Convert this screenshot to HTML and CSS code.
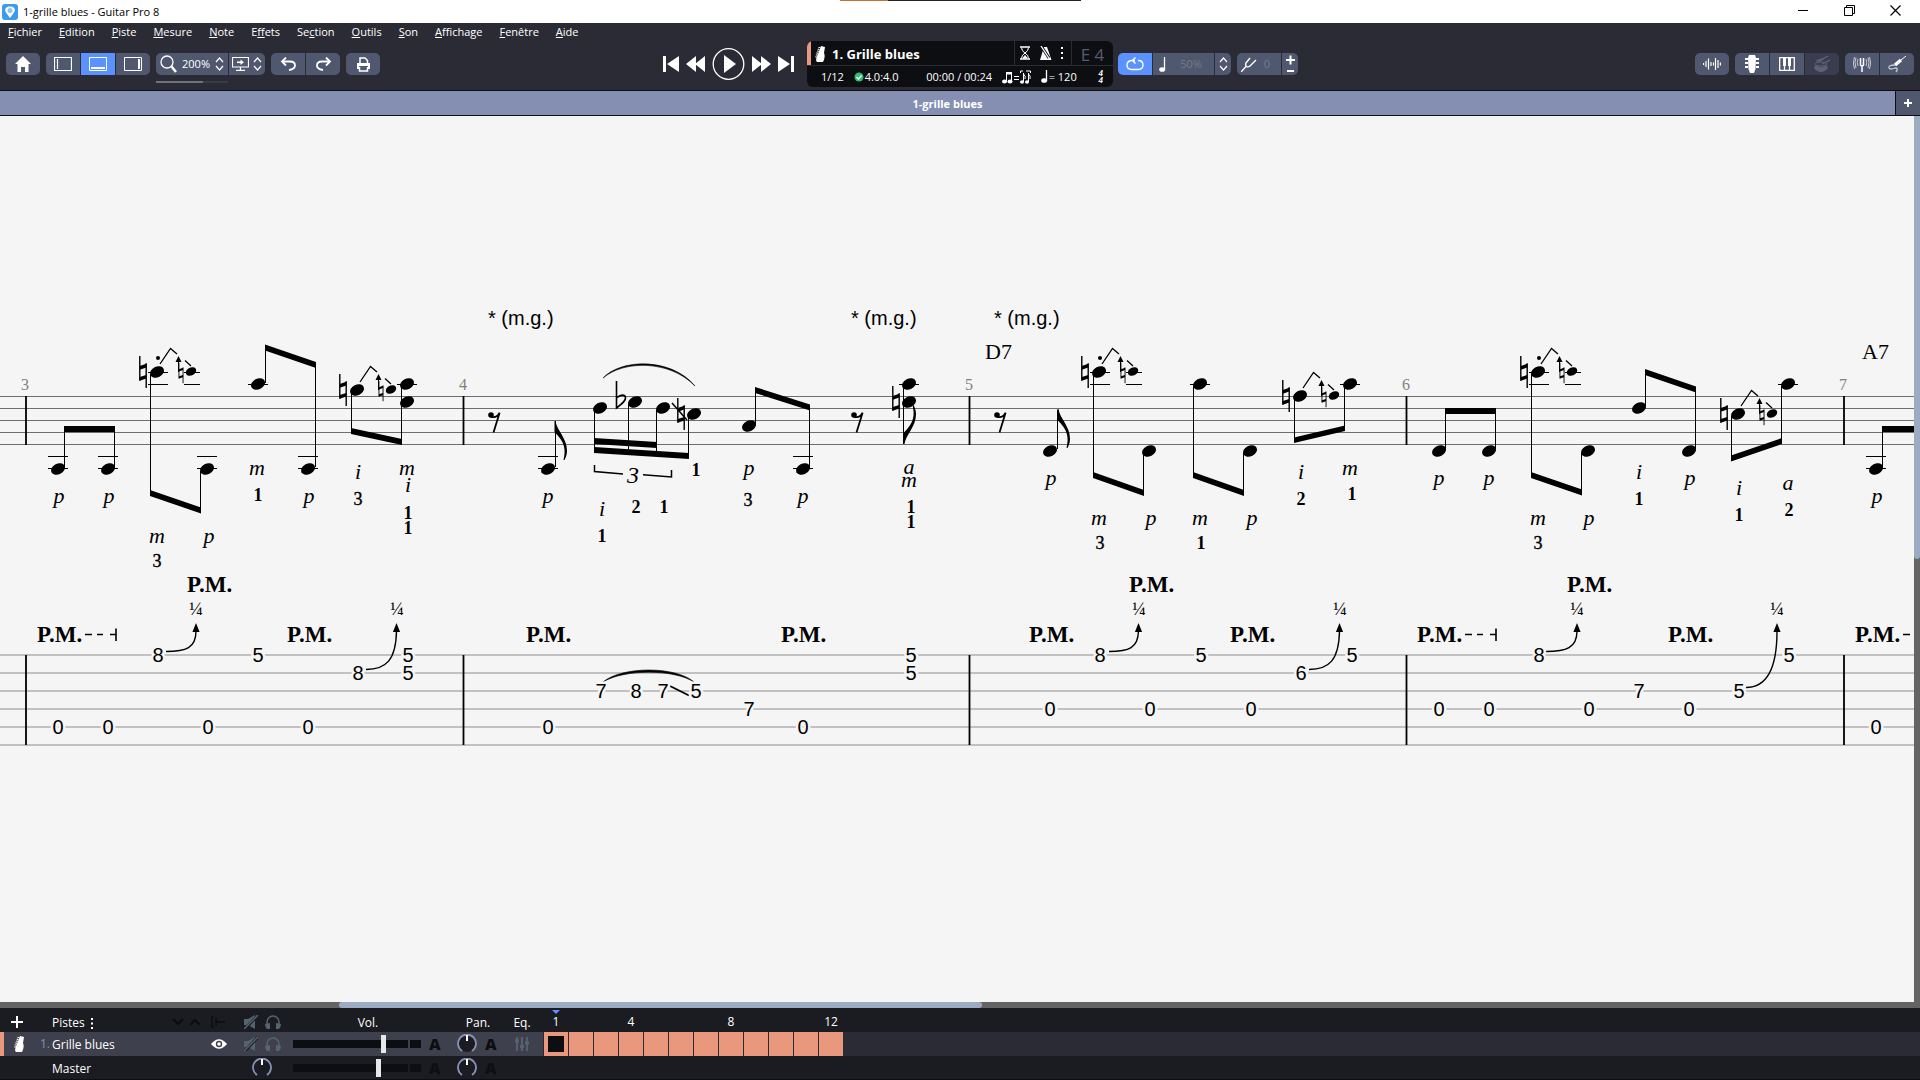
FILE: index.html
```html
<!DOCTYPE html>
<html lang="fr">
<head>
    <meta charset="UTF-8">
    <title>1-grille blues - Guitar Pro 8</title>
    <link rel="stylesheet" href="styles.css">
</head>
<body>
    <!-- shared shapes -->
    <svg class="defs" width="0" height="0">
        <defs>
            <g id="head"><ellipse rx="7.4" ry="5.3" transform="rotate(-27)"/></g>
            <g id="nat">
                <path d="M-3.2-16V8.7M3.2-8.7V16" fill="none" stroke="#000" stroke-width="1.4"/>
                <path d="M-3.2-6L3.2-8.3V-4.5L-3.2-2.3zM-3.2 5L3.2 3V6.6L-3.2 8.7z"/>
            </g>
            <!-- natural note + quarter bend to a small natural note -->
            <g id="bend">
                <use href="#nat" x="-14"/>
                <use href="#head"/>
                <path d="M3-8L13.5-23.5L20-18M28-11.5L34-6" fill="none" stroke="#000" stroke-width="1.3"/>
                <path d="M21.5-10V0" stroke="#000"/>
                <path d="M21.5-16L24.5-10H18.5z"/>
                <use href="#nat" transform="translate(24 1) scale(.64)"/>
                <ellipse cx="34" cy="-.5" rx="5.5" ry="4" transform="rotate(-27 34 -.5)"/>
            </g>
            <g id="bendHigh">
                <use href="#bend"/>
                <circle cx="1" cy="-14" r="2"/>
                <path d="M-9 .5H11M-9 12.5H11M27 .5H43M27 12.5H43" stroke="#000"/>
            </g>
            <g id="low">
                <use href="#head"/>
                <path d="M-10-12.5H10M-10-.5H10" stroke="#000"/>
            </g>
            <g id="high">
                <use href="#head"/>
                <path d="M-10 .5H10" stroke="#000"/>
            </g>
            <g id="rest">
                <circle r="2.8"/>
                <path d="M0 1.8C4 3 7 1 8.6-2.3L2.5 17.6" fill="none" stroke="#000" stroke-width="1.8"/>
            </g>
            <path id="flag" d="M-.5 0H.5C1.5 9 12 17 12 30C12 34 10.5 37 9.5 39H8.5C11 29 10 21-.5 11z"/>
            <g id="pmDash" stroke="#000" stroke-width="1.6">
                <path d="M0 634.5H7M12 634.5H18M25 634.5H31M31 628.5V641"/>
            </g>
            <path id="tip" d="M0 0L3.6 9H-3.6z"/>
            <g id="guitar">
                <path d="M6 0L10 1 9 7C10 9 10 12 8 16L2 16C0 14 2 11 3 8z" fill="#fff"/>
                <path d="M4.5 1L2 8L1 12" fill="none" stroke="#fff" stroke-dasharray="1 1" stroke-width="2"/>
            </g>
            <g id="mute" fill="#566472">
                <path d="M0 4H4L11 0V14L4 10H0z"/>
                <path d="M1 14L14 0" stroke="#1b1c21" stroke-width="3"/>
                <path d="M0 14L14 0" stroke="#566472" stroke-width="1.5"/>
            </g>
            <g id="phones">
                <path d="M2 10V7A6 6 0 0 1 14 7V10" fill="none" stroke="#566472" stroke-width="1.5"/>
                <path d="M0 9L5 8V14H2Q0 12 0 9zM16 9L11 8V14H14Q16 12 16 9z" fill="#566472"/>
            </g>
            <g id="knob">
                <path d="M5 17A9 9 0 1 1 15 17" fill="none" stroke="#8592b4" stroke-width="1.8"/>
                <path d="M10 1V7" stroke="#fff" stroke-width="2"/>
            </g>
            <path id="updown" d="M1 5L4.5 1L8 5M1 9L4.5 13L8 9" fill="none" stroke="#fff" stroke-width="1.2"/>
        </defs>
    </svg>

    <header class="titlebar">
        <svg class="logo" width="16" height="16">
            <rect width="16" height="16" rx="3" fill="#3c9bef"/>
            <path d="M8 14L4 8.5C2 5 4 2.5 8 2.5S14 5 12 8.5z" fill="#fff"/>
            <circle cx="8" cy="6.5" r="2.5" fill="#8cc6f7"/>
        </svg>
        <span>1-grille blues - Guitar Pro 8</span>
        <i class="notch"></i>
        <div class="winbtns">
            <button aria-label="Réduire"><svg width="11" height="11"><path d="M0 5.5H10" stroke="#000"/></svg></button>
            <button aria-label="Restaurer"><svg width="11" height="11"><path d="M.5 2.5H8.5V10.5H.5zM2.5 2.5V.5H10.5V8.5H8.5" fill="none" stroke="#000"/></svg></button>
            <button aria-label="Fermer"><svg width="11" height="11"><path d="M.5.5L10.5 10.5M10.5.5L.5 10.5" stroke="#000" stroke-width="1.2"/></svg></button>
        </div>
    </header>

    <nav class="menu">
        <a href="#"><u>F</u>ichier</a>
        <a href="#"><u>E</u>dition</a>
        <a href="#"><u>P</u>iste</a>
        <a href="#"><u>M</u>esure</a>
        <a href="#"><u>N</u>ote</a>
        <a href="#">E<u>f</u>fets</a>
        <a href="#">Se<u>c</u>tion</a>
        <a href="#"><u>O</u>utils</a>
        <a href="#"><u>S</u>on</a>
        <a href="#"><u>A</u>ffichage</a>
        <a href="#"><u>F</u>enêtre</a>
        <a href="#"><u>A</u>ide</a>
    </nav>

    <div class="toolbar">
        <div class="side left">
            <div class="group">
                <button class="btn" aria-label="Accueil"><svg width="16" height="16"><path d="M8 0L16 8H13.500V16H10V11H6V16H2.500V8H0z" fill="#fff"/></svg></button>
            </div>
            <div class="group">
                <button class="btn" aria-label="Palette"><svg width="18" height="14" fill="none" stroke="#fff"><path d="M.5.5H17.500V13.500H.5zM3.500 2V12" stroke-width="1.2"/></svg></button>
                <button class="btn on" aria-label="Table de mixage"><svg width="18" height="14" fill="none" stroke="#fff"><path d="M.5.5H17.500V13.500H.5z"/><path d="M2 11H16" stroke-width="2"/></svg></button>
                <button class="btn" aria-label="Inspecteur"><svg width="18" height="14" fill="none" stroke="#fff"><path d="M.5.5H17.500V13.500H.5z"/><path d="M15 2V12" stroke-width="2"/></svg></button>
            </div>
            <div class="group">
                <label class="field zoom">
                    <svg width="17" height="18"><circle cx="7" cy="7" r="6" fill="none" stroke="#fff" stroke-width="1.3"/><path d="M11.500 11.500L16 17" stroke="#fff" stroke-width="2.5"/></svg>
                    <input type="text" value="200%" aria-label="Zoom">
                    <svg width="9" height="14"><use href="#updown"/></svg>
                </label>
                <button class="btn screen" aria-label="Affichage écran">
                    <svg width="17" height="14" fill="none" stroke="#fff"><path d="M.5.5H16.500V10H.5zM8.500 10V13M4 13.400H13" stroke-width="1.2"/><path d="M5 5.300H9" stroke-width="1.6"/><path d="M8.500 2.500L12 5.300L8.500 8z" fill="#fff" stroke="none"/></svg>
                    <svg width="9" height="14"><use href="#updown"/></svg>
                </button>
            </div>
            <div class="group">
                <button class="btn" aria-label="Annuler"><svg width="17" height="14" fill="none" stroke="#fff"><path d="M2 4.500H10Q15 4.500 15 8.500Q15 12 9 13" stroke-width="1.8"/><path d="M6 .5L2 4.500L6 8.500" stroke-width="1.8"/></svg></button>
                <button class="btn" aria-label="Rétablir"><svg width="17" height="14" fill="none" stroke="#fff"><path d="M15 4.500H7Q2 4.500 2 8.500Q2 12 8 13" stroke-width="1.8"/><path d="M11 .5L15 4.500L11 8.500" stroke-width="1.8"/></svg></button>
            </div>
            <div class="group">
                <button class="btn" aria-label="Imprimer"><svg width="15" height="15"><path d="M4 6V1H9L11.500 3.500V6" fill="none" stroke="#fff" stroke-width="1.5"/><path d="M1 6H14V12H12V9H3V12H1z" fill="#fff"/><path d="M3.500 10V14H11.500V10" fill="none" stroke="#fff" stroke-width="1.5"/></svg></button>
            </div>

            <div class="transport">
                <button aria-label="Début"><svg width="16" height="16" fill="#fff"><path d="M0 0H3V16H0zM16 0V16L4 8z"/></svg></button>
                <button aria-label="Retour rapide"><svg width="19" height="16" fill="#fff"><path d="M10 0V16L0 8zM19 0V16L9 8z"/></svg></button>
                <button aria-label="Lecture"><svg width="33" height="32"><circle cx="16.500" cy="16" r="15.300" fill="none" stroke="#fff" stroke-width="1.3"/><path d="M12 7V25L24 16z" fill="#fff"/></svg></button>
                <button aria-label="Avance rapide"><svg width="19" height="16" fill="#fff"><path d="M0 0V16L10 8zM9 0V16L19 8z"/></svg></button>
                <button aria-label="Fin"><svg width="16" height="16" fill="#fff"><path d="M16 0H13V16H16zM0 0V16L12 8z"/></svg></button>
            </div>
        </div>

        <div class="lcd">
            <div class="lcd-top">
                <div class="lcd-track"><svg width="10" height="16"><use href="#guitar"/></svg>1. Grille blues</div>
                <div class="lcd-tools">
                    <svg width="10" height="14" fill="none" stroke="#fff"><path d="M0 1H10M0 13H10" stroke-width="1.5"/><path d="M1.500 1.500Q1.500 5 5 7Q8.500 9 8.500 12.500M8.500 1.500Q8.500 5 5 7Q1.500 9 1.500 12.500"/><path d="M3 12L5 9.500L7 12z" fill="#fff"/></svg>
                    <svg width="13" height="14"><path d="M5 1H8L12.500 14H1z" fill="#fff"/><path d="M2 0L10 12" stroke="#0d0e12" stroke-width="3"/><path d="M2 0L10.500 13" stroke="#fff" stroke-width="1.3"/></svg>
                    <svg width="3" height="12" fill="#fff"><path d="M0 0H2V2H0zM0 5H2V7H0zM0 10H2V12H0z"/></svg>
                </div>
                <div class="lcd-note">E 4</div>
            </div>
            <div class="lcd-bottom">
                <span class="bar">1/12</span>
                <span class="beat"><svg width="10" height="10"><circle cx="5" cy="5" r="4.500" fill="#2fbf71"/><path d="M2.500 5L4.500 7L7.500 3.500" fill="none" stroke="#fff" stroke-width="1.3"/></svg>4.0:4.0</span>
                <span class="time">00:00 / 00:24</span>
                <svg class="swing" width="29" height="14"><g fill="#fff"><ellipse cx="2.500" cy="11.500" rx="2.500" ry="2"/><ellipse cx="8" cy="11.500" rx="2.500" ry="2"/><path d="M4 2H10V4.500H4z"/><path d="M12 6H17V7H12zM12 9H17V10H12z"/><ellipse cx="20" cy="12" rx="2" ry="1.800"/><ellipse cx="25" cy="12" rx="2" ry="1.800"/></g><path d="M4.500 3V11M9.500 3V11M21.500 3V12M26.500 3V12M21.500 4Q24 6 23 9M26.500 4Q29 6 28 9M18.500 3V1H21M24 1H28.500V3" fill="none" stroke="#fff"/></svg>
                <span class="tempo"><svg width="7" height="13"><path d="M5.500 0V10" stroke="#fff" stroke-width="1.3"/><ellipse cx="3.200" cy="10.500" rx="3" ry="2.300" fill="#fff"/></svg>= 120</span>
                <span class="sign"><i>4</i><i>4</i></span>
            </div>
        </div>

        <div class="side right">
            <div class="group">
                <button class="btn on" aria-label="Boucle"><svg width="18" height="14" fill="none" stroke="#fff" stroke-width="1.4"><path d="M12 3.500H13Q17 4 17 8Q17 12.500 12.500 12.500H5.500Q1 12.500 1 8Q1 4 5.500 3.500H9"/><path d="M9.500.5L6.500 3.500L9.500 6.500"/></svg></button>
                <label class="field speed">
                    <svg width="7" height="15"><path d="M5.500 0V12" stroke="#fff" stroke-width="1.3"/><ellipse cx="3.200" cy="12.500" rx="3" ry="2.300" fill="#fff"/></svg>
                    <input type="text" value="50%" aria-label="Vitesse" disabled>
                </label>
                <button class="btn slim" aria-label="Régler la vitesse"><svg width="9" height="14"><use href="#updown"/></svg></button>
            </div>
            <div class="group">
                <label class="field pitch">
                    <svg width="16" height="15" fill="none" stroke="#fff" stroke-width="1.4"><path d="M0 15L5 9.500M9 1L5 6Q4 8 5.500 9.500Q7 10.500 9 9L15 3"/></svg>
                    <input type="text" value="0" aria-label="Transposition" disabled>
                </label>
                <button class="btn slim" aria-label="Demi-ton"><svg width="9" height="18" stroke="#fff" stroke-width="2"><path d="M0 5H9M4.500 .5V9.500M1 16H8"/></svg></button>
            </div>

            <div class="panels">
                <div class="group">
                    <button class="btn" aria-label="Piste audio"><svg width="18" height="14" stroke="#fff" stroke-width="1.2"><path d="M.6 6V8M3 4V10M5.500 1.500V12.500M8 5V9M10.500 5.500V8.500M12.500 1V13M15 3V11M17.400 5.500V8.500"/></svg></button>
                </div>
                <div class="group">
                    <button class="btn" aria-label="Manche"><svg width="14" height="18" fill="#fff"><path d="M4 0H10L11 3L10.500 14L9 18H5L3.500 14L3 3z"/><path d="M0 3H3V5H0zM0 7H3V9H0zM0 11H3V13H0zM11 3H14V5H11zM11 7H14V9H11zM11 11H14V13H11z"/></svg></button>
                    <button class="btn" aria-label="Clavier"><svg width="16" height="14"><path d="M.7.7H15.300V13.300H.7zM5.500 8V13M10.500 8V13" fill="none" stroke="#fff" stroke-width="1.3"/><path d="M4 1H7V9H4zM9 1H12V9H9z" fill="#fff"/></svg></button>
                    <button class="btn off" aria-label="Batterie" disabled><svg width="16" height="16" fill="none" stroke="#5f6377"><ellipse cx="7" cy="8" rx="6" ry="2"/><path d="M1 10V13Q7 18 13 13V10Q7 13 1 10z" fill="#5f6377"/><path d="M4 6L14 0M8 8L16 4M2 5L10 2" stroke-width="1.3"/></svg></button>
                </div>
                <div class="group">
                    <button class="btn" aria-label="Accordeur"><svg width="18" height="16" fill="none" stroke="#fff"><path d="M7.500 2V9Q9 11 10.500 9V2M9 10V16" stroke-width="1.5"/><path d="M5 3Q3.500 6.500 5 10M3 1.500Q1 6.500 3 12M1.500 1Q-.8 7 1.500 13M13 3Q14.500 6.500 13 10M15 1.500Q17 6.500 15 12M16.500 1Q18.800 7 16.500 13" stroke="#c5c9d6"/></svg></button>
                    <button class="btn" aria-label="Entrée ligne"><svg width="19" height="17" fill="none" stroke="#fff"><path d="M18 0L13 4"/><path d="M13 4L7 9" stroke-width="3.5"/><path d="M7 9Q0 9 1 12Q2 14 7 12Q11 12 8 16" stroke="#c5c9d6" stroke-width="1.3"/></svg></button>
                </div>
            </div>
        </div>
    </div>

    <div class="tabs">
        <a class="tab" href="#">1-grille blues</a>
        <button class="add" aria-label="Nouvel onglet"><svg width="8" height="8" stroke="#fff" stroke-width="2"><path d="M0 4H8M4 0V8"/></svg></button>
    </div>

    <main class="content">
        <svg class="score">
            <g transform="translate(0 -116)">
                <!-- staff -->
                <path d="M0 396.500H1920M0 408.500H1920M0 420.500H1920M0 432.500H1920M0 444.500H1920" stroke="#6e6e6e"/>
                <path d="M26 396V445M463.500 396V445M969.500 396V445M1406.500 396V445M1844 396V445" stroke="#000" stroke-width="1.8"/>
                <g class="num">
                    <text x="25" y="390">3</text>
                    <text x="463" y="390">4</text>
                    <text x="969" y="390">5</text>
                    <text x="1406" y="390">6</text>
                    <text x="1843" y="390">7</text>
                </g>

                <!-- tablature -->
                <path d="M0 655H1920M0 673H1920M0 691H1920M0 709H1920M0 727H1920M0 745H1920" stroke="#b0b0b0" stroke-width="1.6"/>
                <path d="M26 655V745M463.500 655V745M969.500 655V745M1406.500 655V745M1844 655V745" stroke="#000" stroke-width="1.8"/>

                <!-- noteheads -->
                <use href="#low" x="58" y="469"/><use href="#low" x="108" y="469"/>
                <use href="#bendHigh" x="157" y="372"/><use href="#low" x="207" y="469"/>
                <use href="#high" x="258" y="384"/><use href="#low" x="308" y="469"/>
                <use href="#bend" x="357" y="390"/><use href="#high" x="407" y="384"/><use href="#head" x="407" y="402"/>

                <use href="#rest" x="491" y="415"/><use href="#low" x="548" y="469"/>
                <use href="#head" x="600" y="408"/><use href="#head" x="635" y="402"/>
                <use href="#head" x="663" y="408"/><use href="#head" x="694" y="414"/>
                <use href="#nat" x="681" y="414"/>
                <use href="#head" x="749" y="426"/><use href="#low" x="803" y="469"/>
                <use href="#rest" x="854" y="415"/>
                <use href="#high" x="909" y="384"/><use href="#head" x="909" y="402"/><use href="#nat" x="896" y="402"/>

                <use href="#rest" x="997" y="415"/><use href="#head" x="1050" y="451"/>
                <use href="#bendHigh" x="1099" y="372"/><use href="#head" x="1149" y="451"/>
                <use href="#high" x="1200" y="384"/><use href="#head" x="1250" y="451"/>
                <use href="#bend" x="1300" y="396"/><use href="#high" x="1350" y="384"/>

                <use href="#head" x="1439" y="451"/><use href="#head" x="1489" y="451"/>
                <use href="#bendHigh" x="1538" y="372"/><use href="#head" x="1588" y="451"/>
                <use href="#head" x="1639" y="408"/><use href="#head" x="1689" y="451"/>
                <use href="#bend" x="1738" y="414"/><use href="#high" x="1788" y="384"/>
                <use href="#low" x="1876" y="469"/>

                <!-- stems -->
                <g fill="none" stroke="#000">
                    <path d="M64.500 428V467M114.500 428V467M150.500 374V494M200.500 471V512M265.500 346V383M315.500 364V467M351.500 392V432M401.500 386V444"/>
                    <path d="M555.500 421V467M594.500 410V452M628.500 404V452M656.500 410V454M688.500 416V458M755.500 388V425M809.500 406V467M903.500 386V444"/>
                    <path d="M1057.500 410V449M1093.500 374V476M1143.500 453V494M1193.500 386V476M1243.500 453V494M1294.500 398V441M1344.500 386V429"/>
                    <path d="M1445.500 409V449M1495.500 409V449M1531.500 374V476M1581.500 453V494M1645.500 370V407M1695.500 388V449M1731.500 416V460M1781.500 386V442M1882.500 427V467"/>
                </g>
                <!-- beams -->
                <path d="M64 426H115V432H64zM150 490L201 507.500V513.500L150 496zM265 344.500L316 362V368L265 350.500zM351 428L402 439V445L351 434z"/>
                <path d="M594 447L689 453V459L594 453zM594 438L657 442V448L594 444zM755 387L810 404.500V410.500L755 393z"/>
                <path d="M1093 472L1144 490V496L1093 478zM1193 472L1244 490V496L1193 478zM1294 437.500L1345 425.500V431L1294 443z"/>
                <path d="M1445 408H1496V414H1445zM1531 472L1582 489.500V495.500L1531 478zM1645 369L1696 386.500V392.500L1645 375zM1731 455.500L1782 438V444L1731 461.500zM1882 426H1920V432H1882z"/>
                <use href="#flag" x="555" y="421"/>
                <use href="#flag" x="1058" y="409"/>
                <use href="#flag" transform="translate(904 444) scale(1 -1)"/>

                <!-- flat, slide, slurs, triplet -->
                <path d="M616.500 381V408C622 404 626 401 625.500 397.500C625 394 620 394.500 616.500 398" fill="none" stroke="#000" stroke-width="1.6"/>
                <path d="M672 403L687 420" stroke="#000" stroke-width="1.5"/>
                <path d="M603 378C622 358 672 358 695 386C670 360 624 360 603 378z" stroke="#000" stroke-width=".6"/>
                <path d="M603 682C622 666 676 666 694 682C674 669 624 669 603 682z" stroke="#000" stroke-width=".6"/>
                <path d="M670 686L689 695.500" stroke="#000" stroke-width="1.8"/>
                <path d="M594.500 465V471.500L623 474M643 474.800L671.500 477V470" fill="none" stroke="#000" stroke-width="1.5"/>
                <text class="triplet" x="633" y="483">3</text>

                <g class="mg">
                    <text x="488" y="325">* (m.g.)</text>
                    <text x="851" y="325">* (m.g.)</text>
                    <text x="994" y="325">* (m.g.)</text>
                </g>
                <g class="chord">
                    <text x="985" y="359">D7</text>
                    <text x="1862" y="359">A7</text>
                </g>

                <!-- right hand -->
                <g class="rh">
                    <text x="59" y="503">p</text><text x="109" y="503">p</text><text x="157" y="543">m</text><text x="209" y="543">p</text>
                    <text x="257" y="475">m</text><text x="309" y="503">p</text><text x="358" y="479">i</text><text x="407" y="475">m</text><text x="408" y="492">i</text>
                    <text x="548" y="503">p</text><text x="602" y="516">i</text><text x="749" y="475">p</text><text x="803" y="503">p</text>
                    <text x="909" y="474">a</text><text x="909" y="487">m</text>
                    <text x="1051" y="485">p</text><text x="1099" y="525">m</text><text x="1151" y="525">p</text><text x="1200" y="525">m</text>
                    <text x="1252" y="525">p</text><text x="1301" y="479">i</text><text x="1350" y="475">m</text>
                    <text x="1439" y="485">p</text><text x="1489" y="485">p</text><text x="1538" y="525">m</text><text x="1589" y="525">p</text>
                    <text x="1639" y="479">i</text><text x="1690" y="485">p</text><text x="1739" y="495">i</text><text x="1788" y="490">a</text>
                    <text x="1877" y="503">p</text>
                </g>
                <!-- left hand -->
                <g class="lh">
                    <text class="thin" x="157" y="567">3</text><text x="258" y="501">1</text><text class="thin" x="358" y="505">3</text><text x="408" y="519">1</text><text x="408" y="534">1</text>
                    <text x="602" y="542">1</text><text x="636" y="513">2</text><text x="664" y="513">1</text><text x="696" y="476">1</text><text class="thin" x="748" y="506">3</text>
                    <text x="911" y="513">1</text><text x="911" y="528">1</text>
                    <text class="thin" x="1100" y="549">3</text><text x="1201" y="549">1</text><text x="1301" y="505">2</text><text x="1352" y="500">1</text>
                    <text class="thin" x="1538" y="549">3</text><text x="1639" y="505">1</text><text x="1739" y="521">1</text><text x="1789" y="516">2</text>
                </g>

                <!-- palm mute -->
                <g class="pm">
                    <text x="37" y="642">P.M.</text><text x="187" y="592">P.M.</text><text x="287" y="642">P.M.</text>
                    <text x="526" y="642">P.M.</text><text x="781" y="642">P.M.</text>
                    <text x="1029" y="642">P.M.</text><text x="1129" y="592">P.M.</text><text x="1230" y="642">P.M.</text>
                    <text x="1417" y="642">P.M.</text><text x="1567" y="592">P.M.</text><text x="1668" y="642">P.M.</text>
                    <text x="1855" y="642">P.M.</text>
                </g>
                <use href="#pmDash" x="85"/><use href="#pmDash" x="1465"/><use href="#pmDash" x="1903"/>

                <g class="quarter">
                    <text x="196" y="615">¼</text><text x="397" y="615">¼</text><text x="1139" y="615">¼</text>
                    <text x="1340" y="615">¼</text><text x="1577" y="615">¼</text><text x="1777" y="615">¼</text>
                </g>
                <path d="M166 651.500C186 651.500 196 648 196 631M366 669.500C386 669.500 396 660 396.500 631M1109 651.500C1129 651.500 1138 648 1138.500 631M1309 669.500C1329 669.500 1339 660 1339.500 631M1546 651.500C1566 651.500 1577 648 1577 631M1746 687.500C1768 687.500 1777 665 1777 631" fill="none" stroke="#000" stroke-width="1.4"/>
                <use href="#tip" x="196" y="623"/><use href="#tip" x="396.500" y="623"/><use href="#tip" x="1138.500" y="623"/>
                <use href="#tip" x="1339.500" y="623"/><use href="#tip" x="1577" y="623"/><use href="#tip" x="1777" y="623"/>

                <!-- frets -->
                <g class="fret">
                    <text x="58" y="734">0</text><text x="108" y="734">0</text><text x="158" y="662">8</text><text x="208" y="734">0</text>
                    <text x="258" y="662">5</text><text x="308" y="734">0</text><text x="358" y="680">8</text><text x="408" y="662">5</text><text x="408" y="680">5</text>
                    <text x="548" y="734">0</text><text x="601" y="698">7</text><text x="636" y="698">8</text><text x="663" y="698">7</text>
                    <text x="696" y="698">5</text><text x="749" y="716">7</text><text x="803" y="734">0</text><text x="911" y="662">5</text><text x="911" y="680">5</text>
                    <text x="1050" y="716">0</text><text x="1100" y="662">8</text><text x="1150" y="716">0</text><text x="1201" y="662">5</text>
                    <text x="1251" y="716">0</text><text x="1301" y="680">6</text><text x="1352" y="662">5</text>
                    <text x="1439" y="716">0</text><text x="1489" y="716">0</text><text x="1539" y="662">8</text><text x="1589" y="716">0</text>
                    <text x="1639" y="698">7</text><text x="1689" y="716">0</text><text x="1739" y="698">5</text><text x="1789" y="662">5</text>
                    <text x="1876" y="734">0</text>
                </g>
            </g>
        </svg>
        <div class="vscroll"><i></i></div>
    </main>
    <div class="hscroll"><i></i></div>

    <section class="mixer">
        <div class="row head">
            <div class="lead"><button aria-label="Ajouter une piste"><svg width="12" height="12" stroke="#fff" stroke-width="2"><path d="M0 6H12M6 0V12"/></svg></button></div>
            <div class="name">Pistes <svg width="2" height="11" fill="#fff"><path d="M0 0H2V2H0zM0 4.500H2V6.500H0zM0 9H2V11H0z"/></svg></div>
            <div class="arrows">
                <svg width="12" height="8" fill="none" stroke="#0b0c10" stroke-width="2"><path d="M1 1L6 6L11 1"/></svg>
                <svg width="12" height="8" fill="none" stroke="#0b0c10" stroke-width="2"><path d="M1 7L6 2L11 7"/></svg>
            </div>
            <div class="eye"><svg width="14" height="12" fill="none" stroke="#0b0c10" stroke-width="1.5"><path d="M3 0H1V12H3M5 2V10M5 6H14"/></svg></div>
            <div class="solo"><svg width="14" height="14"><use href="#mute"/></svg><svg width="16" height="14"><use href="#phones"/></svg></div>
            <div class="label">Vol.</div>
            <div class="label">Pan.</div>
            <div class="label">Eq.</div>
            <div class="ruler">
                <span class="now">1</span><span></span><span></span><span>4</span><span></span><span></span>
                <span></span><span>8</span><span></span><span></span><span></span><span>12</span>
            </div>
        </div>
        <div class="row track">
            <div class="lead"><svg width="10" height="16"><use href="#guitar"/></svg><span>1.</span></div>
            <div class="name">Grille blues</div>
            <div></div>
            <div class="eye"><svg width="16" height="10"><path d="M0 5Q8-4.500 16 5Q8 14.500 0 5z" fill="#fff"/><circle cx="8" cy="5" r="3.200" fill="#3f404d"/><circle cx="8" cy="5" r="1.800" fill="#fff"/></svg></div>
            <div class="solo"><svg width="14" height="14"><use href="#mute"/></svg><svg width="16" height="14"><use href="#phones"/></svg></div>
            <div class="vol"><input type="range" value="80" aria-label="Volume Grille blues"><i></i><b>A</b></div>
            <div class="pan"><svg width="20" height="20"><circle cx="10" cy="10" r="8" fill="#1b1c21"/><use href="#knob"/></svg><b>A</b></div>
            <div class="eq"><svg width="14" height="14" stroke="#566472"><path d="M2 0V14M7 0V14M12 0V14" stroke-width="1.8"/><path d="M0 4H4M5 9.500H9M10 6H14" stroke-width="3"/></svg></div>
            <div class="cells">
                <span class="now"></span><span></span><span></span><span></span><span></span><span></span>
                <span></span><span></span><span></span><span></span><span></span><span></span>
            </div>
        </div>
        <div class="row master">
            <div></div>
            <div class="name">Master</div>
            <div></div>
            <div></div>
            <div class="solo"><svg width="20" height="20"><use href="#knob"/></svg></div>
            <div class="vol"><input type="range" value="75" aria-label="Volume Master"><i></i><b>A</b></div>
            <div class="pan"><svg width="20" height="20"><use href="#knob"/></svg><b>A</b></div>
        </div>
    </section>
</body>
</html>
```

FILE: styles.css
```css
* {
    margin: 0;
    padding: 0;
    box-sizing: border-box;
}
body {
    display: flex;
    flex-direction: column;
    height: 100vh;
    overflow: hidden;
    background: #1b1c21;
    color: #fff;
    font: 11px/16px "Open Sans", "Noto Sans", sans-serif;
}
button {
    border: 0;
    background: none;
    color: inherit;
    font: inherit;
    display: flex;
    align-items: center;
    justify-content: center;
}
a {
    color: inherit;
    text-decoration: none;
}
svg {
    display: block;
    flex: none;
}
.defs {
    position: absolute;
}

/* title bar */
.titlebar {
    position: relative;
    display: flex;
    align-items: center;
    height: 23px;
    padding-left: 2px;
    background: #fff;
    color: #000;
}
.logo {
    margin-right: 5px;
}
.notch {
    position: absolute;
    top: 0;
    left: 840px;
    width: 241px;
    height: 1px;
    background: linear-gradient(90deg, #c8702f 48px, #222 48px);
}
.winbtns {
    display: flex;
    margin-left: auto;
    padding: 0 2px 2px 0;
}
.winbtns button {
    width: 46px;
    height: 21px;
}

/* menu */
.menu {
    display: flex;
    gap: 17px;
    height: 18px;
    padding: 1px 8px;
    background: #2b2b35;
}

/* toolbar */
.toolbar {
    display: grid;
    grid-template-columns: 1fr 306px 1fr;
    height: 50px;
    padding-bottom: 3px;
    background: #2b2b35;
    border-bottom: 1px solid #0d0e12;
}
.side {
    display: flex;
    align-items: center;
    gap: 6px;
    padding: 0 6px;
}
.right {
    padding-left: 5px;
}
.group {
    display: flex;
    gap: 1px;
}
.btn, .field {
    display: flex;
    align-items: center;
    justify-content: center;
    width: 34px;
    height: 22px;
    background: #50586f;
}
.group > :first-child {
    border-radius: 5px 0 0 5px;
}
.group > :last-child {
    border-radius: 0 5px 5px 0;
}
.group > :only-child {
    border-radius: 5px;
}
.btn.on {
    background: #5a92ff;
}
.btn.off {
    background: #3a3d50;
}
.btn.slim {
    width: 16px;
}
.btn.screen {
    width: 36px;
    gap: 4px;
}
.field input {
    width: 34px;
    border: 0;
    background: none;
    color: #fff;
    font: inherit;
    text-align: center;
}
.field input:disabled {
    color: #777a86;
}
.zoom {
    position: relative;
    width: 72px;
    gap: 2px;
}
.zoom::after {
    content: "";
    position: absolute;
    left: 0;
    right: 0;
    bottom: -8px;
    height: 2px;
    background: linear-gradient(90deg, #6d7180 47px, #383a47 47px);
}
.speed {
    width: 61px;
    gap: 8px;
}
.pitch {
    width: 44px;
}
.pitch input {
    width: 20px;
}
.transport {
    display: flex;
    align-items: center;
    gap: 7px;
    margin-left: auto;
    padding-right: 7px;
}

/* display */
.lcd {
    overflow: hidden;
    border-radius: 6px;
    background: #0d0e12;
}
.lcd-top {
    display: flex;
    height: 25px;
    border-bottom: 1px solid #2b2b35;
}
.lcd-track {
    flex: 1;
    display: flex;
    align-items: center;
    gap: 7px;
    padding: 2px 0 0 4px;
    border-left: 4px solid #ea987d;
    font-size: 13px;
    font-weight: 700;
}
.lcd-tools {
    display: flex;
    align-items: center;
    justify-content: space-between;
    width: 58px;
    padding: 0 7px 0 5px;
    border: solid #2b2b35;
    border-width: 0 1px;
}
.lcd-note {
    width: 41px;
    color: #565a70;
    font-size: 17px;
    line-height: 28px;
    text-align: center;
}
.lcd-bottom {
    display: flex;
    align-items: center;
    height: 21px;
    padding: 0 10px 0 14px;
    justify-content: space-between;
}
.lcd-bottom span {
    display: flex;
    align-items: center;
}
.beat {
    gap: 1px;
}
.time {
    margin-left: 18px;
}
.tempo {
    gap: 1px;
}
.lcd-bottom .sign {
    flex-direction: column;
    margin-left: 12px;
    font: italic 700 9px/7px "Liberation Serif", serif;
}
.panels {
    display: flex;
    gap: 6px;
    margin-left: auto;
}

/* tabs */
.tabs {
    display: flex;
    height: 25px;
    border-bottom: 1px solid #0d0e12;
}
.tab {
    flex: 1;
    background: #848fb1;
    font-weight: 700;
    line-height: 25px;
    text-align: center;
}
.add {
    width: 25px;
    border-left: 1px solid #0d0e12;
    background: #50586f;
}

/* score */
.content {
    flex: 1;
    display: flex;
    min-height: 0;
    background: #f5f5f5;
}
.score {
    flex: 1;
    width: 0;
    height: 100%;
    fill: #000;
}
.score text {
    font-family: "Liberation Serif", serif;
    text-anchor: middle;
}
.score .num text {
    font-size: 16px;
    fill: #808080;
}
.score .mg text {
    font: 20px "Liberation Sans", sans-serif;
    text-anchor: start;
}
.score .chord text {
    font-size: 22px;
    text-anchor: start;
}
.score .rh text {
    font-size: 22px;
    font-style: italic;
}
.score .lh text {
    font-size: 18px;
    font-weight: 700;
}
.score .lh .thin {
    font-weight: 400;
    stroke: #000;
    stroke-width: .4px;
}
.score .triplet {
    font-size: 24px;
    font-style: italic;
}
.score .pm text {
    font-size: 23px;
    font-weight: 700;
    text-anchor: start;
}
.score .quarter text {
    font-size: 18px;
}
.score .fret text {
    font: 20px "Liberation Sans", sans-serif;
    stroke: #f5f5f5;
    stroke-width: 5px;
    paint-order: stroke;
}

/* scroll bars */
.vscroll {
    width: 6px;
    background: #646464;
}
.vscroll i {
    display: block;
    height: 50%;
    border-radius: 0 0 3px 3px;
    background: #9aabc2;
}
.hscroll {
    height: 6px;
    background: #646464;
}
.hscroll i {
    display: block;
    width: 33.5%;
    height: 6px;
    margin-left: 17.65%;
    border-radius: 3px;
    background: #9aabc2;
}

/* mixer */
.mixer {
    padding: 2px 0 1px;
    font-size: 12px;
    border-bottom: 1px solid #0d0e12;
}
.row {
    display: grid;
    grid-template-columns: 52px 118px 34px 32px 52px 160px 60px 28px 1fr;
    align-items: center;
    height: 22px;
}
.row.track {
    height: 24px;
    background: linear-gradient(90deg, #ea987d 4px, #3f404d 4px, #3f404d 543px, #2b2b35 543px);
}
.row.master {
    height: 22px;
    padding-top: 2px;
}
.lead {
    display: flex;
    align-items: center;
    gap: 16px;
    padding-left: 11px;
}
.track .lead {
    padding-left: 14px;
    color: #8592b4;
}
.name, .label {
    padding-top: 2px;
}
.name {
    display: flex;
    align-items: center;
    gap: 6px;
}
.arrows {
    display: flex;
    gap: 5px;
    padding-left: 2px;
}
.eye {
    padding-left: 7px;
}
.solo {
    display: flex;
    justify-content: center;
    gap: 7px;
}
.label {
    text-align: center;
}
.vol, .pan {
    display: flex;
    align-items: center;
}
.vol {
    gap: 2px;
    padding-left: 5px;
}
.vol i {
    width: 11px;
    height: 8px;
    background: #0d0e12;
}
.vol b {
    margin-left: 6px;
}
.row b {
    color: #0d0e12;
    font: 800 16px/20px "Open Sans", sans-serif;
}
.pan {
    gap: 8px;
    padding-left: 9px;
}
.eq {
    padding-left: 7px;
}
input[type=range] {
    appearance: none;
    width: 115px;
    height: 8px;
    background: #0d0e12;
}
input[type=range]::-webkit-slider-thumb {
    appearance: none;
    width: 5px;
    height: 18px;
    background: #e8e8e8;
}
.ruler, .cells {
    display: grid;
    grid-template-columns: repeat(12, 24px);
    gap: 1px;
    height: 100%;
    padding-left: 8px;
}
.ruler span {
    line-height: 24px;
    text-align: center;
}
.ruler .now {
    position: relative;
}
.ruler .now::before {
    content: "";
    position: absolute;
    top: 0;
    left: 8px;
    border: 4px solid transparent;
    border-top-color: #5a92ff;
}
.cells span {
    background: #ea987d;
}
.cells .now {
    border: 4px solid #ea987d;
    background: #0d0e12;
}
```
